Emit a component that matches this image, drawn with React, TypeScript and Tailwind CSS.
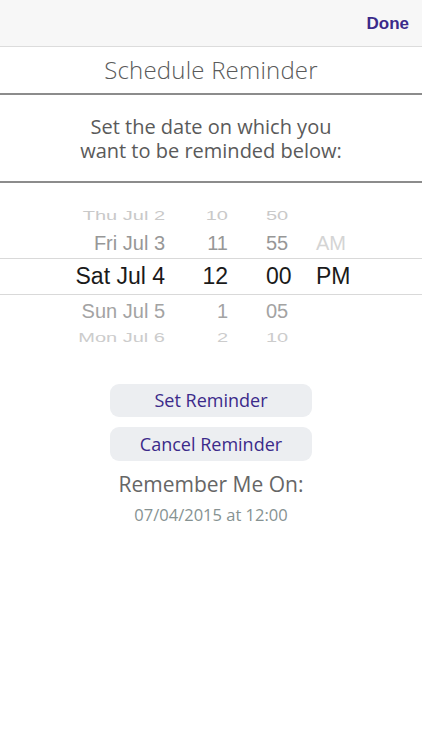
import React from "react";

const sans = { fontFamily: '"Open Sans", "Noto Sans", sans-serif' };
const helv = { fontFamily: '"Liberation Sans", Arial, sans-serif' };

function Row({
  h,
  date,
  hour,
  min,
  ampm,
  cls,
  ampmCls,
  squash,
  size,
}: {
  h: string;
  date: string;
  hour: string;
  min: string;
  ampm: string;
  cls: string;
  ampmCls?: string;
  squash?: boolean;
  size: string;
}) {
  const t = squash ? "scale-y-[0.66]" : "";
  return (
    <div className={`flex items-center ${h} ${size} ${cls}`} style={helv}>
      <div className={`w-[165px] text-right ${t}`}>{date}</div>
      <div className={`w-[63px] text-right ${t}`}>{hour}</div>
      <div className={`w-[88px] pl-[38px] ${t}`}>{min}</div>
      <div className={`${t} ${ampmCls ?? ""}`}>{ampm}</div>
    </div>
  );
}

export default function App() {
  return (
    <div className="w-[422px] h-[750px] bg-white overflow-hidden">
      <div className="h-[47px] bg-[#f7f7f7] border-b border-[#dcdcdc] flex items-center justify-end pr-[13px] pt-[2px]">
        <span className="text-[17px] font-bold text-[#3b2a8a]" style={helv}>
          Done
        </span>
      </div>
      <div className="h-[48px] flex items-center justify-center border-b-2 border-[#8c8c8c]">
        <span className="text-[24px] text-[#5a5a5a] font-light tracking-[0.2px]" style={sans}>
          Schedule Reminder
        </span>
      </div>
      <div className="h-[88px] flex flex-col items-center justify-center border-b-2 border-[#8c8c8c] pt-[2px]">
        <p className="text-[20px] leading-[24px] text-[#5a5a5a] text-center" style={sans}>
          Set the date on which you
        </p>
        <p className="text-[20px] leading-[24px] text-[#5a5a5a] text-center" style={sans}>
          want to be reminded below:
        </p>
      </div>
      <div className="pt-[19px]">
        <Row h="h-[26px]" size="text-[20px]" cls="text-[#c9c9c9]" date="Thu Jul 2" hour="10" min="50" ampm="" squash />
        <Row h="h-[30px]" size="text-[20px]" cls="text-[#979797]" date="Fri Jul 3" hour="11" min="55" ampm="AM" ampmCls="text-[#d4d4d4]" />
        <div className="border-y border-[#d9d9d9]">
          <Row h="h-[35px]" size="text-[23px]" cls="text-[#1a1a1a]" date="Sat Jul 4" hour="12" min="00" ampm="PM" />
        </div>
        <Row h="h-[31px]" size="text-[20px]" cls="text-[#a3a3a3]" date="Sun Jul 5" hour="1" min="05" ampm="" />
        <Row h="h-[22px]" size="text-[20px]" cls="text-[#cccccc]" date="Mon Jul 6" hour="2" min="10" ampm="" squash />
      </div>
      <div className="flex flex-col items-center pt-[36px]" style={sans}>
        <div className="w-[202px] h-[33px] rounded-[9px] bg-[#eceef1] flex items-center justify-center text-[18px] text-[#3b2a8a]">
          Set Reminder
        </div>
        <div className="mt-[10px] w-[202px] h-[34px] rounded-[9px] bg-[#eceef1] flex items-center justify-center text-[18px] text-[#3b2a8a]">
          Cancel Reminder
        </div>
        <div className="mt-[9px] text-[21px] text-[#666666] leading-[28px]">Remember Me On:</div>
        <div className="mt-[6px] text-[16.5px] text-[#869292] leading-[22px]">07/04/2015 at 12:00</div>
      </div>
    </div>
  );
}
